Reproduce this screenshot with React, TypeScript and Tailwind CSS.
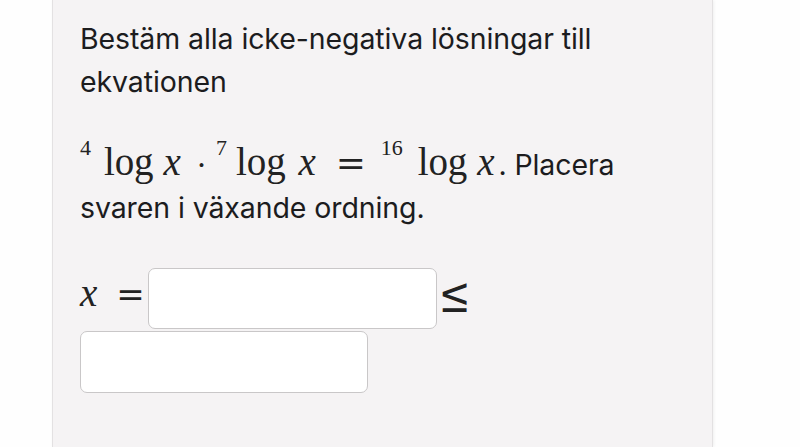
export default function App() {
  const serif = "font-['Liberation_Serif','Times_New_Roman',serif]";
  const sym = "font-['DejaVu_Serif',serif]";
  const sup = "text-[22px] align-[20px]";
  return (
    <div className="w-[800px] h-[447px] bg-[#fefefe] flex overflow-hidden">
      {/* Question panel */}
      <div className="ml-[52px] w-[661px] h-full bg-[#f5f3f4] border-l border-r border-[#e3e1e2] shadow-[1px_0_3px_rgba(0,0,0,0.06)] pl-[27px] pt-[17px] text-[#1c1c1e] font-['Inter','Liberation_Sans',sans-serif]">
        <p className="text-[28.5px] leading-[43px] tracking-[-0.1px]">
          Bestäm alla icke-negativa lösningar till
          <br />
          ekvationen
        </p>

        <p className="mt-[34px] text-[28.5px] leading-[43px] tracking-[-0.1px]">
          <span className={`${serif} text-[39px] leading-none text-[#222]`}>
            <span className={`${sup} mr-[13px]`}>4</span>log<i className="ml-[10px]">x</i>
            <span className={`${sym} text-[30px] ml-[16px] mr-[10px]`}>·</span>
            <span className={`${sup} mr-[9px]`}>7</span>log<i className="ml-[13px]">x</i>
            <span className={`${sym} text-[36px] ml-[20px] mr-[15px]`}>=</span>
            <span className={`${sup} mr-[15px]`}>16</span>log<i className="ml-[10px]">x</i>
          </span>
          <span className="ml-[4px]">. Placera</span>
          <br />
          svaren i växande ordning.
        </p>

        {/* Answer inputs */}
        <div className="mt-[39px] flex items-start">
          <span className={`${serif} text-[39px] leading-[50px] text-[#222]`}>
            <i>x</i>
            <span className={`${sym} text-[34px] ml-[19px] mr-[3px]`}>=</span>
          </span>
          <div className="w-[289px] h-[61px] bg-white border border-[#c9c7c8] rounded-[7px]" />
          <span className={`${sym} inline-block text-[38px] leading-[54px] ml-[2px] scale-y-[1.3] text-[#222]`}>≤</span>
        </div>
        <div className="mt-[2px] w-[288px] h-[62px] bg-white border border-[#c9c7c8] rounded-[7px]" />
      </div>
    </div>
  );
}
